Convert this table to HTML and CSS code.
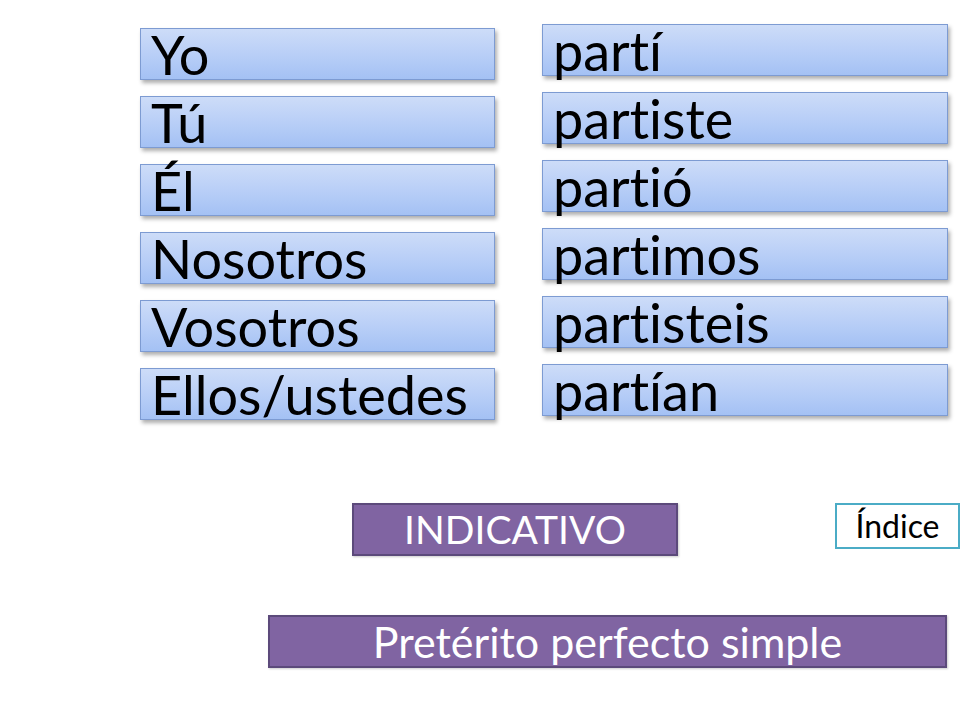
FILE: index.html
```html
<!DOCTYPE html>
<html lang="es">
<head>
<meta charset="utf-8">
<title>Pretérito perfecto simple</title>
<link rel="stylesheet" href="styles.css">
</head>
<body>
<div class="slide">
  <div class="columns">
    <div class="col col-left">
      <div class="box">Yo</div>
      <div class="box">Tú</div>
      <div class="box">Él</div>
      <div class="box">Nosotros</div>
      <div class="box">Vosotros</div>
      <div class="box">Ellos/ustedes</div>
    </div>
    <div class="col col-right">
      <div class="box">partí</div>
      <div class="box">partiste</div>
      <div class="box">partió</div>
      <div class="box">partimos</div>
      <div class="box">partisteis</div>
      <div class="box">partían</div>
    </div>
  </div>
  <div class="mood-row">
    <div class="purple mood">INDICATIVO</div>
    <div class="index">Índice</div>
  </div>
  <div class="tense-row">
    <div class="purple tense">Pretérito perfecto simple</div>
  </div>
</div>
</body>
</html>
```

FILE: styles.css
```css
html, body {
  margin: 0;
  padding: 0;
  background: #ffffff;
}
.slide {
  width: 960px;
  height: 720px;
  overflow: hidden;
  font-family: Lato, "Open Sans", sans-serif;
  font-variant-ligatures: none;
}
.columns {
  display: flex;
  align-items: flex-start;
}
.col {
  display: flex;
  flex-direction: column;
  gap: 16px;
}
.col-left {
  margin-left: 140px;
  margin-top: 28px;
  width: 355px;
}
.col-right {
  margin-left: 47px;
  margin-top: 24px;
  width: 406px;
}
.box {
  box-sizing: border-box;
  height: 52px;
  border: 1px solid #7d9bd2;
  background: linear-gradient(to bottom, #cddcf8 0%, #b9cff7 50%, #a4c1f4 100%);
  box-shadow: 2px 3px 4px rgba(0, 0, 0, 0.32);
  font-size: 54px;
  line-height: 52px;
  padding-left: 10px;
  color: #000000;
  white-space: nowrap;
  overflow: visible;
}
.mood-row {
  display: flex;
  align-items: flex-start;
  margin-top: 83px;
}
.purple {
  box-sizing: border-box;
  background: #8064a2;
  border: 2px solid #5c4a7b;
  color: #ffffff;
  height: 53px;
  line-height: 49px;
  text-align: center;
  box-shadow: 1px 1px 2px rgba(0, 0, 0, 0.2);
}
.mood {
  margin-left: 352px;
  width: 326px;
  font-size: 39px;
}
.index {
  box-sizing: border-box;
  margin-left: 157px;
  width: 125px;
  height: 46px;
  border: 2px solid #4bacc6;
  font-size: 32px;
  line-height: 42px;
  text-align: center;
  color: #000000;
}
.tense-row {
  display: flex;
  margin-top: 59px;
}
.tense {
  margin-left: 268px;
  width: 679px;
  font-size: 43px;
}
```
